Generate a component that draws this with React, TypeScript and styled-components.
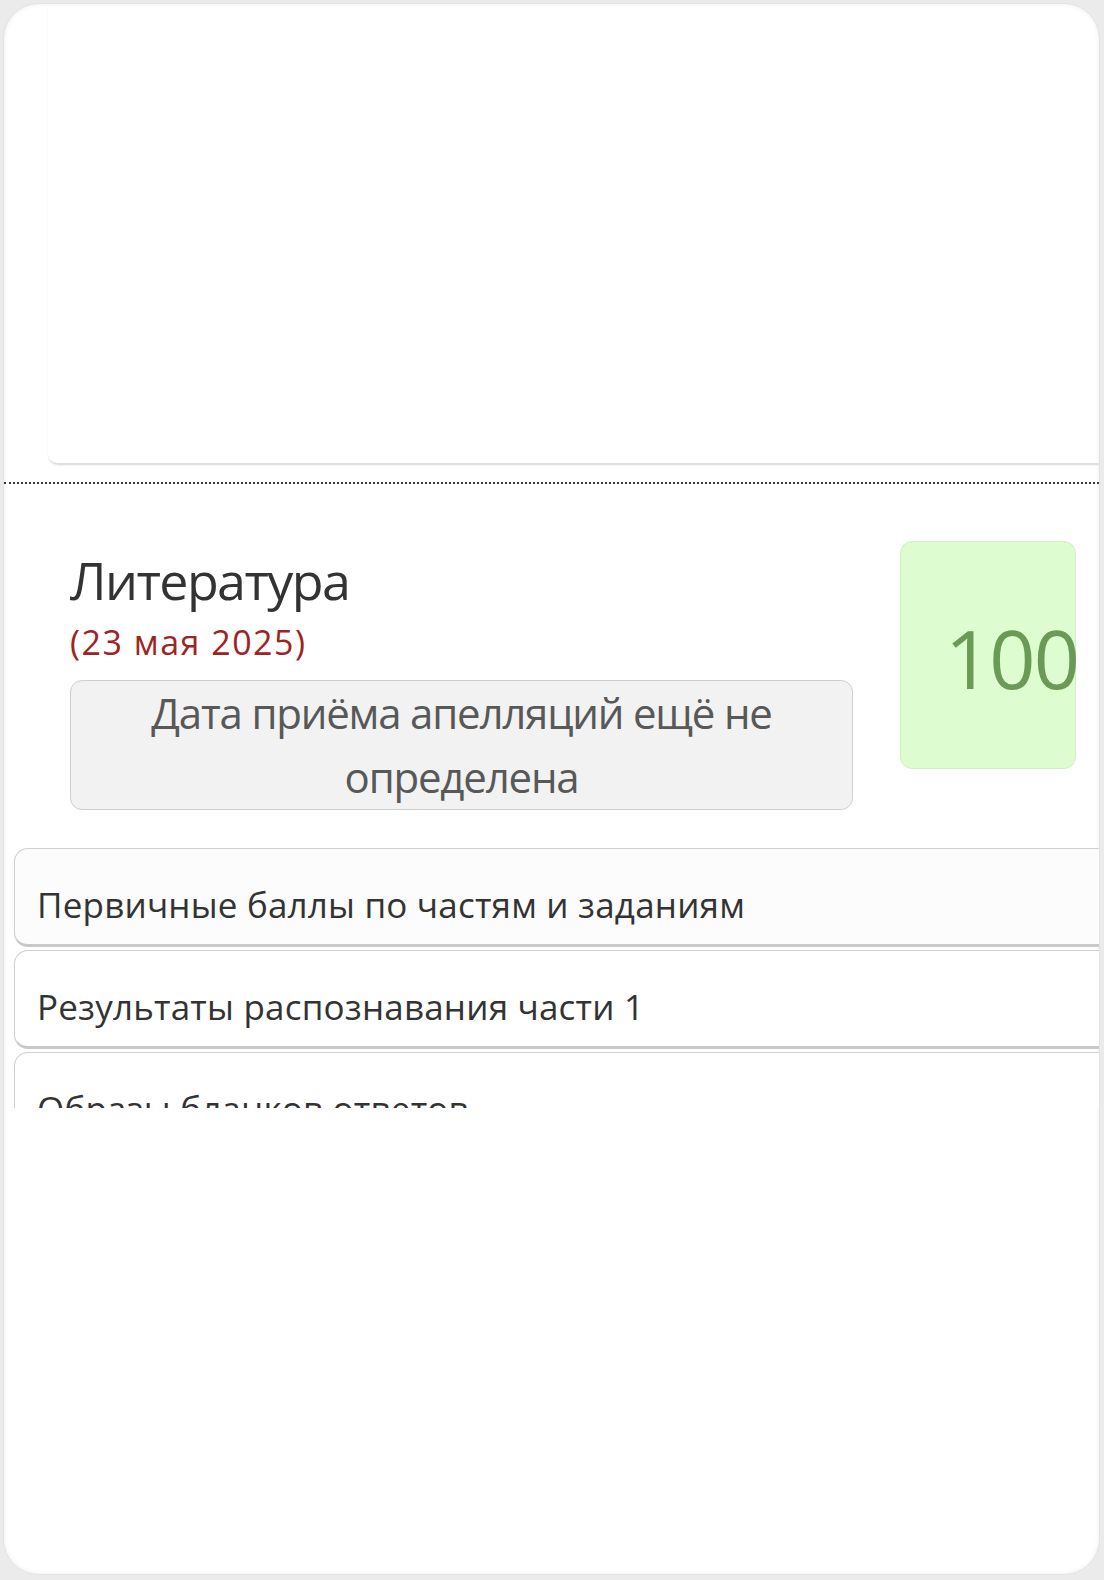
import React from "react";
import styled, { createGlobalStyle } from "styled-components";

const GlobalStyle = createGlobalStyle`
    * { box-sizing: border-box; }
    body {
        margin: 0;
        background: #ebebeb;
        font-family: "Open Sans", "Noto Sans", sans-serif;
    }
`;

const Frame = styled.div`
    width: 1097px;
    height: 1572px;
    margin: 3px 4px 5px 3px;
    background: #ffffff;
    border: 1px solid #e3e3e3;
    border-radius: 36px;
    box-shadow: inset 0 0 5px rgba(0, 0, 0, 0.07);
    overflow: hidden;
`;

const Screen = styled.div`
    height: 1104px;
    overflow: hidden;
`;

const PrevCard = styled.div`
    height: 461px;
    margin-left: 44px;
    border-bottom: 2px solid #e0e0e0;
    border-bottom-left-radius: 10px;
    box-shadow: 0 1px 2px rgba(0, 0, 0, 0.05);
`;

const Separator = styled.hr`
    margin: 17px 0 0;
    border: 0;
    border-top: 2px dotted #3a3a3a;
    height: 0;
`;

const ExamRow = styled.div`
    display: flex;
    align-items: flex-start;
    gap: 47px;
    padding: 57px 0 0 66px;
`;

const InfoColumn = styled.div`
    width: 783px;
    padding-top: 8px;
`;

const Subject = styled.div`
    font-size: 52px;
    line-height: 62px;
    letter-spacing: -1.6px;
    color: #333333;
`;

const ExamDate = styled.div`
    margin-top: 9px;
    font-size: 34px;
    line-height: 44px;
    letter-spacing: 1.5px;
    color: #9c2424;
`;

const AppealNote = styled.div`
    margin-top: 16px;
    padding: 0 40px;
    background: #f2f2f2;
    border: 1px solid #cfcfcf;
    border-radius: 12px;
    text-align: center;
    font-size: 42px;
    line-height: 64px;
    letter-spacing: -1.2px;
    color: #585858;
`;

const ScoreBox = styled.div<{ $passed?: boolean }>`
    flex: none;
    display: flex;
    align-items: center;
    width: 176px;
    height: 228px;
    padding: 4px 0 0 44px;
    background: ${(p) => (p.$passed ? "#ddfccf" : "#fcdcdc")};
    border: 1px solid ${(p) => (p.$passed ? "#d3eec6" : "#eec6c6")};
    border-radius: 12px;
    white-space: nowrap;
    font-size: 81px;
    letter-spacing: -2px;
    color: ${(p) => (p.$passed ? "#6a9a56" : "#9a5656")};
`;

const Sections = styled.div`
    display: flex;
    flex-direction: column;
    gap: 3px;
    margin: 38px -40px 0 10px;
`;

const SectionItem = styled.div<{ $shaded?: boolean }>`
    height: 99px;
    padding: 32px 22px 0;
    background: ${(p) => (p.$shaded ? "#fcfcfc" : "#ffffff")};
    border: 1px solid #d0d0d0;
    border-bottom: 3px solid #c9c9c9;
    border-radius: 14px;
    font-size: 35px;
    line-height: 48px;
    letter-spacing: 0.2px;
    color: #333333;
`;

const sections = [
    "Первичные баллы по частям и заданиям",
    "Результаты распознавания части 1",
    "Образы бланков ответов",
];

export default function App() {
    return (
        <>
            <GlobalStyle />
            <Frame>
                <Screen>
                    <PrevCard />
                    <Separator />
                    <ExamRow>
                        <InfoColumn>
                            <Subject>Литература</Subject>
                            <ExamDate>(23 мая 2025)</ExamDate>
                            <AppealNote>Дата приёма апелляций ещё не определена</AppealNote>
                        </InfoColumn>
                        <ScoreBox $passed>100</ScoreBox>
                    </ExamRow>
                    <Sections>
                        {sections.map((title, i) => (
                            <SectionItem key={title} $shaded={i === 0}>
                                {title}
                            </SectionItem>
                        ))}
                    </Sections>
                </Screen>
            </Frame>
        </>
    );
}
